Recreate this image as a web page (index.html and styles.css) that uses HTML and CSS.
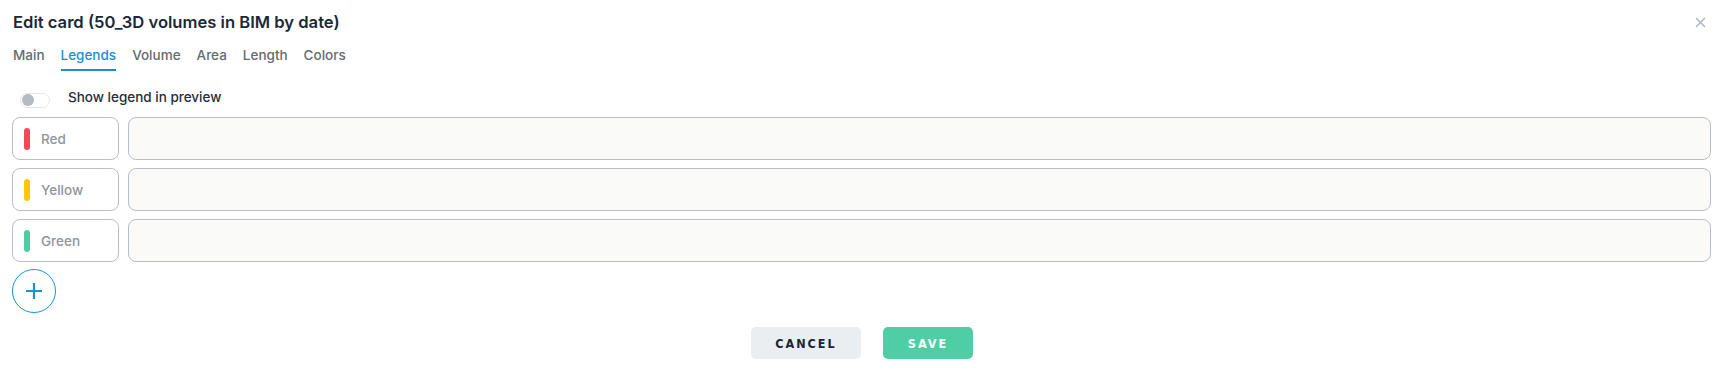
FILE: index.html
```html
<!DOCTYPE html>
<html>
<head>
<meta charset="utf-8">
<link rel="stylesheet" href="styles.css">
</head>
<body>
<div class="dialog">
  <div class="header">
    <h1 class="title">Edit card (50_3D volumes in BIM by date)</h1>
    <button class="close" aria-label="Close">
      <svg width="11" height="11" viewBox="0 0 11 11"><path d="M1 1L10 10M10 1L1 10" stroke="#aab3bf" stroke-width="1.4" fill="none"/></svg>
    </button>
  </div>
  <nav class="tabs">
    <span class="tab">Main</span>
    <span class="tab active">Legends</span>
    <span class="tab">Volume</span>
    <span class="tab">Area</span>
    <span class="tab">Length</span>
    <span class="tab">Colors</span>
  </nav>
  <div class="toggle-row">
    <span class="toggle"><span class="knob"></span></span>
    <span class="toggle-label">Show legend in preview</span>
  </div>
  <div class="rows">
    <div class="row">
      <div class="label-box"><span class="swatch red"></span><span class="label">Red</span></div>
      <div class="input"></div>
    </div>
    <div class="row">
      <div class="label-box"><span class="swatch yellow"></span><span class="label">Yellow</span></div>
      <div class="input"></div>
    </div>
    <div class="row">
      <div class="label-box"><span class="swatch green"></span><span class="label">Green</span></div>
      <div class="input"></div>
    </div>
  </div>
  <button class="add" aria-label="Add">
    <svg width="18" height="18" viewBox="0 0 18 18"><path d="M9 1V17M1 9H17" stroke="#1a93d3" stroke-width="2.2" fill="none"/></svg>
  </button>
  <div class="actions">
    <button class="btn cancel">CANCEL</button>
    <button class="btn save">SAVE</button>
  </div>
</div>
</body>
</html>
```
FILE: styles.css
```css
* { box-sizing: border-box; }
html, body { margin: 0; background: #fff; }
body { font-family: Inter, "Noto Sans", Roboto, sans-serif; color: #1b2838; }
.dialog { padding: 11px 13px 0 12px; display: flex; flex-direction: column; }
.header { display: flex; justify-content: space-between; align-items: center; height: 22px; }
.title { margin: 0 0 0 1px; font-size: 16.6px; font-weight: 600; line-height: 22px; color: #1b2838; letter-spacing: 0; }
.close { border: 0; background: none; padding: 0; margin-right: 5px; width: 11px; height: 11px; display: flex; }
.tabs { display: flex; gap: 16px; margin-top: 12px; height: 26px; padding-left: 1px; }
.tab { font-size: 13.5px; font-weight: 500; color: #646b73; line-height: 20px; height: 26px; }
.tab.active { color: #1a8fd0; border-bottom: 2px solid #1a8fd0; }
.toggle-row { display: flex; align-items: center; margin-top: 15px; height: 22px; }
.toggle { width: 30px; height: 15px; margin-left: 8px; border: 1px solid #e3e6ea; border-radius: 8px; background: #fff; display: flex; align-items: center; padding-left: 1px; margin-top: 6px; }
.knob { width: 12px; height: 12px; border-radius: 50%; background: #b4bbc5; }
.toggle-label { margin-left: 18px; font-size: 13.5px; font-weight: 500; color: #222e3c; }
.rows { display: flex; flex-direction: column; gap: 8px; margin-top: 9px; }
.row { display: flex; gap: 9px; height: 43px; }
.label-box { width: 107px; border: 1px solid #b8bec7; border-radius: 8px; display: flex; align-items: center; padding-left: 11px; background: #fff; }
.swatch { width: 6px; height: 22px; border-radius: 3px; }
.red { background: #f5475a; }
.yellow { background: #ffc806; }
.green { background: #4ccfa0; }
.label { margin-left: 11px; font-size: 13.5px; font-weight: 500; color: #8e959f; }
.input { flex: 1; border: 1px solid #b8bec7; border-radius: 8px; background: #fafaf8; }
.add { margin-top: 7px; width: 44px; height: 44px; border-radius: 50%; border: 1px solid #1a93d3; background: #fff; display: flex; align-items: center; justify-content: center; padding: 0; }
.actions { display: flex; justify-content: center; gap: 22px; margin-top: 14px; padding-left: 1px; }
.btn { height: 32px; border: 0; border-radius: 5px; font-family: "DejaVu Sans Condensed", "DejaVu Sans", Roboto, sans-serif; font-stretch: condensed; font-weight: 700; font-size: 12.5px; letter-spacing: 2px; }
.cancel { width: 110px; background: #ebeef1; color: #172538; }
.save { width: 90px; background: #4fcea6; color: #fff; }
```
